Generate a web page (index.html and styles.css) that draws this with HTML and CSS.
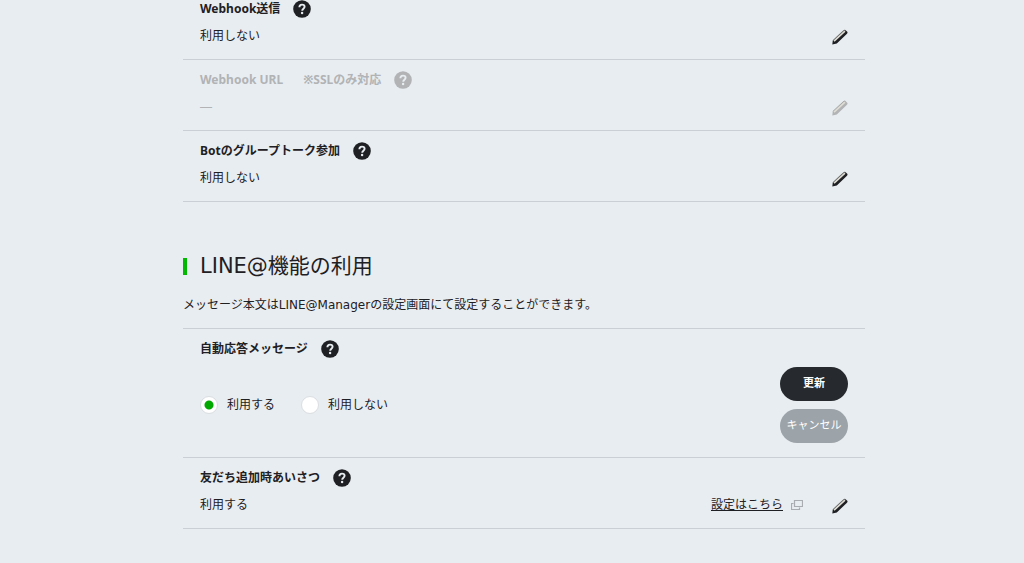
FILE: index.html
```html
<!DOCTYPE html>
<html lang="ja">
<head>
	<meta charset="utf-8">
	<title>LINE@機能の利用</title>
	<link rel="stylesheet" href="styles.css">
</head>
<body>
	<svg class="symbols" aria-hidden="true">
		<symbol id="help" viewBox="0 0 18 18">
			<circle cx="9" cy="9" r="8.8" fill="currentColor"/>
			<path d="M6.4 7.2C6.4 5.4 7.4 4.6 9 4.6s2.6.8 2.6 2.2c0 1.9-2.400 1.900-2.400 3.900" fill="none" stroke="#e8edf1" stroke-width="1.9"/>
			<circle cx="9.1" cy="13" r="1.2" fill="#e8edf1"/>
		</symbol>
		<symbol id="pencil" viewBox="0 0 16 16">
			<path d="M.3 15.6L.8 11.400 11.400 1.600Q12.500.5 13.600 1.200L15.300 2.800Q16 3.700 15 4.800L4.800 14.400z" fill="currentColor"/>
			<path d="M.8 11.400L11.400 1.600Q12.500.6 13.400 1.200" fill="none" stroke="#8d8c88" stroke-width=".6"/>
			<path d="M2 12.200L12.900 2.100" fill="none" stroke="#dedcd4" stroke-width="1.7"/>
		</symbol>
		<symbol id="popup" viewBox="0 0 12 10">
			<path d="M3.5.5h8v6h-8zM2.5 3.500h-2v6h8v-2" fill="none" stroke="#a9adb1" stroke-width="1.2"/>
		</symbol>
	</svg>
	<main class="settings">
		<section class="list list-top">
			<div class="row">
				<div class="row-body">
					<h3 class="row-title">Webhook送信<button class="help" type="button" aria-label="ヘルプ"><svg><use href="#help"/></svg></button></h3>
					<p class="value">利用しない</p>
				</div>
				<button class="edit" type="button" aria-label="編集"><svg><use href="#pencil"/></svg></button>
			</div>
			<div class="row row-disabled">
				<div class="row-body">
					<h3 class="row-title">Webhook URL<span class="note">※SSLのみ対応</span><button class="help" type="button" aria-label="ヘルプ" disabled><svg><use href="#help"/></svg></button></h3>
					<p class="value">―</p>
				</div>
				<button class="edit" type="button" aria-label="編集" disabled><svg><use href="#pencil"/></svg></button>
			</div>
			<div class="row">
				<div class="row-body">
					<h3 class="row-title">Botのグループトーク参加<button class="help" type="button" aria-label="ヘルプ"><svg><use href="#help"/></svg></button></h3>
					<p class="value">利用しない</p>
				</div>
				<button class="edit" type="button" aria-label="編集"><svg><use href="#pencil"/></svg></button>
			</div>
		</section>

		<h2 class="section-title">LINE@機能の利用</h2>
		<p class="lead">メッセージ本文はLINE@Managerの設定画面にて設定することができます。</p>

		<section class="list list-line">
			<form class="row">
				<div class="row-body">
					<h3 class="row-title">自動応答メッセージ<button class="help" type="button" aria-label="ヘルプ"><svg><use href="#help"/></svg></button></h3>
					<div class="choices">
						<label class="choice"><input class="radio" type="radio" name="reply" value="on" checked>利用する</label>
						<label class="choice"><input class="radio" type="radio" name="reply" value="off">利用しない</label>
					</div>
				</div>
				<div class="buttons">
					<button class="btn btn-update" type="button">更新</button>
					<button class="btn btn-cancel" type="button">キャンセル</button>
				</div>
			</form>
			<div class="row">
				<div class="row-body">
					<h3 class="row-title">友だち追加時あいさつ<button class="help" type="button" aria-label="ヘルプ"><svg><use href="#help"/></svg></button></h3>
					<p class="value">利用する</p>
				</div>
				<a class="link" href="#"><span class="link-text">設定はこちら</span><svg class="popup"><use href="#popup"/></svg></a>
				<button class="edit" type="button" aria-label="編集"><svg><use href="#pencil"/></svg></button>
			</div>
		</section>
	</main>
</body>
</html>
```
FILE: styles.css
```css
* {
	box-sizing: border-box;
}
body {
	margin: 0;
	padding-left: 24px;
	background: #e8edf1;
	color: #1e2023;
	font: 12px/24px "DejaVu Sans", "Noto Sans CJK JP", sans-serif;
}
h2, h3, p {
	margin: 0;
	font-weight: normal;
}
button {
	padding: 0;
	border: 0;
	background: none;
	color: inherit;
	font: inherit;
	cursor: pointer;
}
.symbols {
	display: none;
}
.settings {
	max-width: 682px;
	margin: 0 auto;
}

/* rows */
.list-top {
	margin-top: -11px;
}
.list-line {
	border-top: 1px solid #c9cfd4;
}
.row {
	display: flex;
	align-items: flex-end;
	padding: 9px 17px 14px;
	border-bottom: 1px solid #c9cfd4;
}
.row-disabled {
	color: #b1b3b5;
}
.row-body {
	flex: 1;
}
.row-title {
	display: flex;
	align-items: center;
	height: 22px;
	font: bold 12px/22px "Noto Sans", "Noto Sans CJK JP", sans-serif;
}
.note {
	margin-left: 20px;
}
.value {
	margin-top: 7px;
	line-height: 18px;
}
.help {
	width: 18px;
	height: 18px;
	margin-left: 13px;
}
.help svg {
	display: block;
	width: 18px;
	height: 18px;
}
.edit {
	width: 16px;
	height: 16px;
}
.edit svg {
	display: block;
	width: 16px;
	height: 16px;
}

/* section heading */
.section-title {
	display: flex;
	align-items: center;
	gap: 13px;
	margin-top: 48px;
	font-size: 21px;
	line-height: 32px;
}
.section-title::before {
	content: "";
	width: 4px;
	height: 17px;
	background: #00b900;
}
.lead {
	margin: 11px 0;
}

/* form */
.choices {
	display: flex;
	gap: 26px;
	margin: 35px 0 28px;
}
.choice {
	display: flex;
	align-items: center;
	gap: 9px;
	height: 20px;
}
.radio {
	appearance: none;
	width: 18px;
	height: 18px;
	margin: 0;
	border: 1px solid #dadee1;
	border-radius: 50%;
	background: #fff;
}
.radio:checked {
	background: radial-gradient(circle, #00a800 4px, #fff 5px);
}
.buttons {
	display: flex;
	flex-direction: column;
	gap: 8px;
}
.btn {
	width: 68px;
	height: 34px;
	border-radius: 17px;
	color: #fff;
	font-size: 11px;
}
.btn-update {
	background: #262a2e;
	font-weight: bold;
}
.btn-cancel {
	background: #9ca4aa;
}
.link {
	display: flex;
	align-items: center;
	gap: 8px;
	margin-right: 29px;
	color: inherit;
	line-height: 18px;
	text-decoration: none;
}
.link-text {
	text-decoration: underline;
}
.popup {
	width: 12px;
	height: 10px;
}
```
